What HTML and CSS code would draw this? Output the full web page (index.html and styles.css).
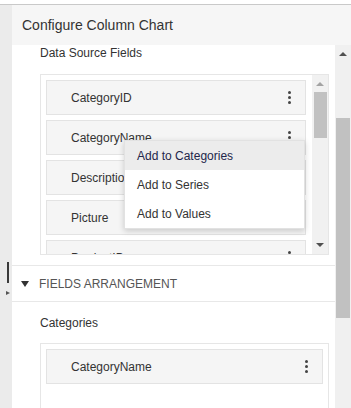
FILE: index.html
```html
<!DOCTYPE html>
<html lang="en">
<head>
    <meta charset="UTF-8">
    <meta name="viewport" content="width=device-width, initial-scale=1.0">
    <title>Configure Column Chart</title>
    <link rel="stylesheet" href="styles.css">
</head>
<body>
    <div class="app">
        <div class="strip">
            <div class="splitter"></div>
            <div class="splitter-arrow"></div>
        </div>
        <div class="panel">
            <div class="header">Configure Column Chart</div>
            <div class="body">
                <div class="content">
                    <div class="label">Data Source Fields</div>
                    <div class="listbox source">
                        <div class="list-items">
                            <div class="field"><span>CategoryID</span><span class="kebab"><i></i><i></i><i></i></span></div>
                            <div class="field"><span>CategoryName</span><span class="kebab"><i></i><i></i><i></i></span></div>
                            <div class="field"><span>Description</span><span class="kebab"><i></i><i></i><i></i></span></div>
                            <div class="field"><span>Picture</span><span class="kebab"><i></i><i></i><i></i></span></div>
                            <div class="field"><span>ProductID</span><span class="kebab"><i></i><i></i><i></i></span></div>
                        </div>
                        <div class="scrollbar inner">
                            <div class="arrow up"></div>
                            <div class="thumb"></div>
                            <div class="arrow down"></div>
                        </div>
                        <div class="menu">
                            <div class="menu-item active">Add to Categories</div>
                            <div class="menu-item">Add to Series</div>
                            <div class="menu-item">Add to Values</div>
                        </div>
                    </div>
                    <div class="section-head">
                        <span class="caret"></span>
                        <span>FIELDS ARRANGEMENT</span>
                    </div>
                    <div class="label categories">Categories</div>
                    <div class="listbox target">
                        <div class="list-items">
                            <div class="field"><span>CategoryName</span><span class="kebab"><i></i><i></i><i></i></span></div>
                        </div>
                    </div>
                </div>
                <div class="scrollbar outer">
                    <div class="arrow up"></div>
                    <div class="thumb"></div>
                </div>
            </div>
        </div>
    </div>
</body>
</html>
```

FILE: styles.css
```css
body {
    margin: 0;
    font-family: 'Liberation Sans', Arial, sans-serif;
    background-color: #fff;
    color: #333;
    height: 408px;
    overflow: hidden;
}
.app {
    margin-top: 4px;
    border-top: 1px solid #c9c9c9;
    height: 403px;
    display: flex;
}
.strip {
    width: 12px;
    background-color: #ebebeb;
    display: flex;
    flex-direction: column;
    padding-top: 257px;
    box-sizing: border-box;
}
.splitter {
    width: 2px;
    height: 21px;
    margin-left: 7px;
    background-color: #3a3a3a;
}
.splitter-arrow {
    width: 0;
    height: 0;
    margin: 8px 0 0 6px;
    border-top: 2.5px solid transparent;
    border-bottom: 2.5px solid transparent;
    border-left: 4px solid #555;
}
.panel {
    flex: 1;
    display: flex;
    flex-direction: column;
    min-width: 0;
}
.header {
    height: 40px;
    flex-shrink: 0;
    display: flex;
    align-items: center;
    padding-left: 10px;
    background-color: #f6f6f6;
    font-size: 14px;
    color: #333;
}
.body {
    flex: 1;
    display: flex;
    min-height: 0;
}
.content {
    flex: 1;
    background-color: #fff;
    overflow: hidden;
}
.label {
    font-size: 12px;
    line-height: 14px;
    padding-left: 28px;
    padding-top: 1px;
    color: #333;
}
.listbox {
    position: relative;
    margin: 14px 6px 0 28px;
    border: 1px solid #e6e6e6;
    display: flex;
}
.listbox.source {
    height: 179px;
}
.listbox.target {
    margin-top: 13px;
    height: 80px;
}
.list-items {
    flex: 1;
    overflow: hidden;
    padding: 5px 6px 0 5px;
    display: flex;
    flex-direction: column;
    gap: 5px;
}
.target .list-items {
    padding-right: 5px;
}
.field {
    height: 33px;
    flex-shrink: 0;
    border: 1px solid #e3e3e3;
    background-color: #f5f5f5;
    display: flex;
    align-items: center;
    justify-content: space-between;
    padding: 0 14px 0 24px;
    font-size: 12px;
    color: #333;
}
.kebab {
    display: flex;
    flex-direction: column;
    gap: 2px;
}
.kebab i {
    width: 3px;
    height: 3px;
    border-radius: 50%;
    background-color: #444;
}
.scrollbar {
    background-color: #f1f1f1;
    display: flex;
    flex-direction: column;
    align-items: center;
}
.scrollbar.inner {
    width: 16px;
}
.scrollbar.outer {
    width: 16px;
    background-color: #f0f0f0;
}
.arrow {
    width: 0;
    height: 0;
    border-left: 4px solid transparent;
    border-right: 4px solid transparent;
}
.arrow.up {
    border-bottom: 4px solid #a3a3a3;
    margin-top: 7px;
}
.outer .arrow.up {
    margin-top: 7px;
    border-bottom-color: #505050;
}
.arrow.down {
    border-top: 4px solid #505050;
    margin-top: auto;
    margin-bottom: 7px;
}
.thumb {
    width: 13px;
    background-color: #c1c1c1;
}
.inner .thumb {
    height: 46px;
    margin-top: 6px;
}
.outer .thumb {
    width: 14px;
    height: 200px;
    margin-top: 62px;
}
.menu {
    position: absolute;
    left: 83px;
    top: 65px;
    width: 179px;
    background-color: #fff;
    border: 1px solid #e2e2e2;
    box-shadow: 0 2px 6px rgba(0, 0, 0, 0.18);
    z-index: 1;
}
.menu-item {
    height: 29px;
    display: flex;
    align-items: center;
    padding-left: 12px;
    font-size: 12px;
    color: #333;
}
.menu-item.active {
    background-color: #ececec;
    color: #23264a;
}
.section-head {
    margin-top: 10px;
    height: 35px;
    border-top: 1px solid #e8e8e8;
    border-bottom: 1px solid #e8e8e8;
    display: flex;
    align-items: center;
    font-size: 12px;
    color: #555;
}
.caret {
    width: 0;
    height: 0;
    margin: 1px 10px 0 9px;
    border-left: 4px solid transparent;
    border-right: 4px solid transparent;
    border-top: 6px solid #333;
}
.label.categories {
    padding-top: 14px;
}
```
